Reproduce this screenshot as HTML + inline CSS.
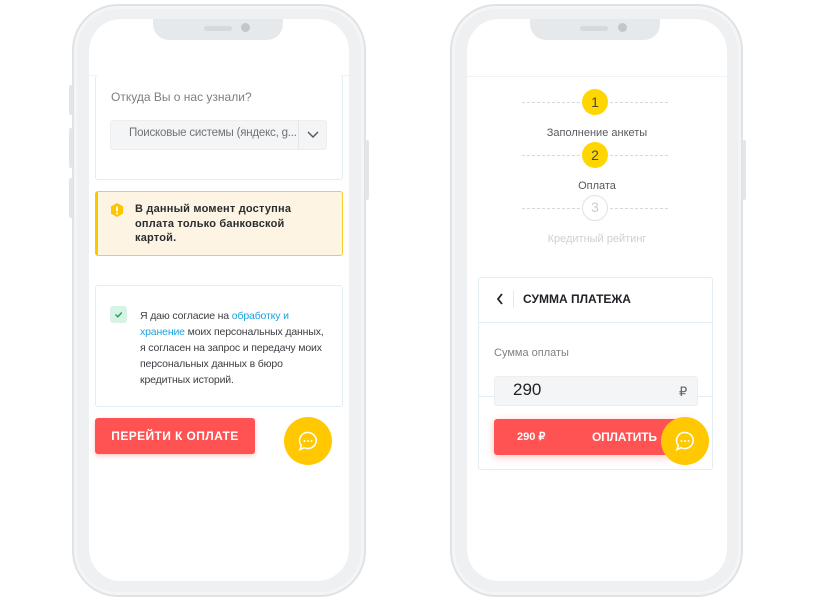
<!DOCTYPE html>
<html><head><meta charset="utf-8"><style>
*{box-sizing:border-box;margin:0;padding:0}
body{width:825px;height:600px;background:#fff;position:relative;overflow:hidden;font-family:"Liberation Sans","Noto Sans CJK SC",sans-serif;color:#2b2f33}
.a{position:absolute}
.frame{position:absolute;border-radius:46px;background:#eef0f1;border:2px solid #e0e3e6;box-shadow:inset 0 0 0 3px #f4f5f6}
.screen{position:absolute;background:#fff;border-radius:32px;overflow:hidden}
.notch{position:absolute;background:#e6e9eb;border-radius:0 0 16px 16px}
.card{position:absolute;border:1px solid #e3eef4;border-radius:3px;background:#fff}
.t{position:absolute;white-space:nowrap}
.chat{position:absolute;width:48px;height:48px;border-radius:50%;background:#ffc800}
.dash{position:absolute;height:0;border-top:1px dashed #d6d9dc}
.circ{position:absolute;width:26px;height:26px;border-radius:50%;background:#ffd600;text-align:center;line-height:26px;font-size:14px;color:#4a4a3a}
</style></head><body>

<!-- left phone -->
<div class="frame" style="left:72px;top:4px;width:294px;height:593px"></div>
<div class="a" style="left:69px;top:85px;width:4px;height:30px;background:#e3e6e8;border-radius:2px"></div>
<div class="a" style="left:69px;top:128px;width:4px;height:40px;background:#e3e6e8;border-radius:2px"></div>
<div class="a" style="left:69px;top:178px;width:4px;height:40px;background:#e3e6e8;border-radius:2px"></div>
<div class="a" style="left:365px;top:140px;width:4px;height:60px;background:#e3e6e8;border-radius:2px"></div>
<div class="screen" style="left:89px;top:19px;width:260px;height:562px">
  <div class="notch" style="left:64px;top:0;width:130px;height:21px"></div>
</div>
<div class="a" style="left:204px;top:26px;width:28px;height:5px;border-radius:3px;background:#d5d9dc"></div>
<div class="a" style="left:241px;top:23px;width:9px;height:9px;border-radius:50%;background:#c3c7ca"></div>
<div class="a" style="left:89px;top:75px;width:260px;height:1px;background:#f0f2f3"></div>
<div class="card" style="left:95px;top:75px;width:248px;height:105px;border-top:none"></div>
<div class="t" style="left:111px;top:90px;font-size:12px;color:#7a7f84">Откуда Вы о нас узнали?</div>
<div class="a" style="left:110px;top:120px;width:217px;height:30px;background:#f4f5f6;border:1px solid #eceef0;border-radius:3px"></div>
<div class="a" style="left:298px;top:121px;width:1px;height:28px;background:#e4e6e8"></div>
<div class="t" style="left:129px;top:127px;font-size:11.5px;color:#6e7378;letter-spacing:-0.2px">Поисковые системы (яндекс, g...</div>
<svg class="a" style="left:306px;top:130px" width="14" height="10"><path d="M2 2l5 5 5-5" fill="none" stroke="#555" stroke-width="1.4"/></svg>
<div class="a" style="left:95px;top:191px;width:248px;height:65px;background:#fdf4e3;border:1.5px solid #f9cd2a;border-left:3px solid #f9c800;border-radius:3px"></div>
<svg class="a" style="left:109px;top:202px" width="16" height="16"><polygon points="8,1 14,4.5 14,11.5 8,15 2,11.5 2,4.5" fill="#ffc400"/><rect x="7.1" y="4.5" width="1.8" height="5" fill="#fff"/><rect x="7.1" y="10.6" width="1.8" height="1.8" fill="#fff"/></svg>
<div class="t" style="left:135px;top:202px;font-size:11px;font-weight:bold;line-height:14.5px;color:#2a2d30;letter-spacing:0.2px">В данный момент доступна<br>оплата только банковской<br>картой.</div>
<div class="card" style="left:95px;top:285px;width:248px;height:122px"></div>
<div class="a" style="left:110px;top:306px;width:17px;height:17px;background:#d8f3e6;border-radius:3px"></div>
<svg class="a" style="left:113px;top:309px" width="11" height="11"><path d="M2.5 5.5l2.3 2.3 4-4.3" fill="none" stroke="#1faa5a" stroke-width="1.5"/></svg>
<div class="t" style="left:140px;top:308px;font-size:10.5px;line-height:16px;color:#3a3e42;letter-spacing:-0.15px">Я даю согласие на <span style="color:#1aa3e0">обработку и</span><br><span style="color:#1aa3e0">хранение</span> моих персональных данных,<br>я согласен на запрос и передачу моих<br>персональных данных в бюро<br>кредитных историй.</div>
<div class="a" style="left:95px;top:418px;width:160px;height:36px;background:#ff5252;border-radius:3px;box-shadow:0 2px 5px rgba(255,80,80,.3)"></div>
<div class="t" style="left:95px;top:429px;width:160px;text-align:center;font-size:12px;font-weight:bold;color:#fff;letter-spacing:0.4px">ПЕРЕЙТИ К ОПЛАТЕ</div>
<div class="chat" style="left:284px;top:417px"></div>
<svg class="a" style="left:296px;top:429px" width="24" height="24"><path d="M12 3.5a8.5 8 0 1 1-4 15.2L4 20.5l1.3-4A8 8 0 0 1 12 3.5z" fill="none" stroke="#fff" stroke-width="1.6"/><circle cx="8.5" cy="12" r="1" fill="#fff"/><circle cx="12" cy="12" r="1" fill="#fff"/><circle cx="15.5" cy="12" r="1" fill="#fff"/></svg>

<!-- right phone -->
<div class="frame" style="left:450px;top:4px;width:293px;height:593px"></div>
<div class="a" style="left:742px;top:140px;width:4px;height:60px;background:#e3e6e8;border-radius:2px"></div>
<div class="screen" style="left:467px;top:19px;width:260px;height:562px">
  <div class="notch" style="left:63px;top:0;width:130px;height:21px"></div>
</div>
<div class="a" style="left:580px;top:26px;width:28px;height:5px;border-radius:3px;background:#d5d9dc"></div>
<div class="a" style="left:618px;top:23px;width:9px;height:9px;border-radius:50%;background:#c3c7ca"></div>
<div class="a" style="left:467px;top:76px;width:260px;height:1px;background:#f0f2f3"></div>
<div class="dash" style="left:522px;top:102px;width:58px"></div><div class="dash" style="left:610px;top:102px;width:58px"></div>
<div class="circ" style="left:582px;top:89px">1</div>
<div class="t" style="left:467px;top:127px;width:260px;text-align:center;font-size:11px;color:#555a5f">Заполнение анкеты</div>
<div class="dash" style="left:522px;top:155px;width:58px"></div><div class="dash" style="left:610px;top:155px;width:58px"></div>
<div class="circ" style="left:582px;top:142px">2</div>
<div class="t" style="left:467px;top:180px;width:260px;text-align:center;font-size:11px;color:#555a5f">Оплата</div>
<div class="dash" style="left:522px;top:208px;width:58px"></div><div class="dash" style="left:610px;top:208px;width:58px"></div>
<div class="circ" style="left:582px;top:195px;background:#fff;border:1.5px solid #dfe2e4;color:#ccc;line-height:23px">3</div>
<div class="t" style="left:467px;top:233px;width:260px;text-align:center;font-size:11px;color:#cdd0d3">Кредитный рейтинг</div>
<div class="card" style="left:478px;top:277px;width:235px;height:193px"></div>
<div class="a" style="left:478px;top:322px;width:235px;height:1px;background:#e3eef4"></div>
<svg class="a" style="left:495px;top:292px" width="10" height="14"><path d="M7 2L3 7l4 5" fill="none" stroke="#222" stroke-width="1.8"/></svg>
<div class="a" style="left:513px;top:290px;width:1px;height:18px;background:#e6e8ea"></div>
<div class="t" style="left:523px;top:292px;font-size:12px;font-weight:bold;color:#1f2226">СУММА ПЛАТЕЖА</div>
<div class="t" style="left:494px;top:347px;font-size:11px;color:#7d8286">Сумма оплаты</div>
<div class="a" style="left:478px;top:396px;width:235px;height:1px;background:#e3eef4"></div>
<div class="a" style="left:494px;top:376px;width:204px;height:30px;background:#f4f5f6;border:1px solid #eceef0;border-radius:3px"></div>
<div class="t" style="left:513px;top:380px;font-size:17px;color:#1f2226">290</div>
<div class="t" style="left:679px;top:384px;font-size:13px;color:#666">₽</div>
<div class="a" style="left:494px;top:419px;width:200px;height:36px;background:#ff5252;border-radius:3px;box-shadow:0 2px 8px rgba(255,80,80,.35)"></div>
<div class="t" style="left:517px;top:430px;font-size:11px;font-weight:bold;color:#fff">290 ₽</div>
<div class="t" style="left:592px;top:430px;font-size:12px;font-weight:bold;color:#fff;letter-spacing:-0.2px">ОПЛАТИТЬ</div>
<div class="chat" style="left:661px;top:417px"></div>
<svg class="a" style="left:673px;top:429px" width="24" height="24"><path d="M12 3.5a8.5 8 0 1 1-4 15.2L4 20.5l1.3-4A8 8 0 0 1 12 3.5z" fill="none" stroke="#fff" stroke-width="1.6"/><circle cx="8.5" cy="12" r="1" fill="#fff"/><circle cx="12" cy="12" r="1" fill="#fff"/><circle cx="15.5" cy="12" r="1" fill="#fff"/></svg>
</body></html>
